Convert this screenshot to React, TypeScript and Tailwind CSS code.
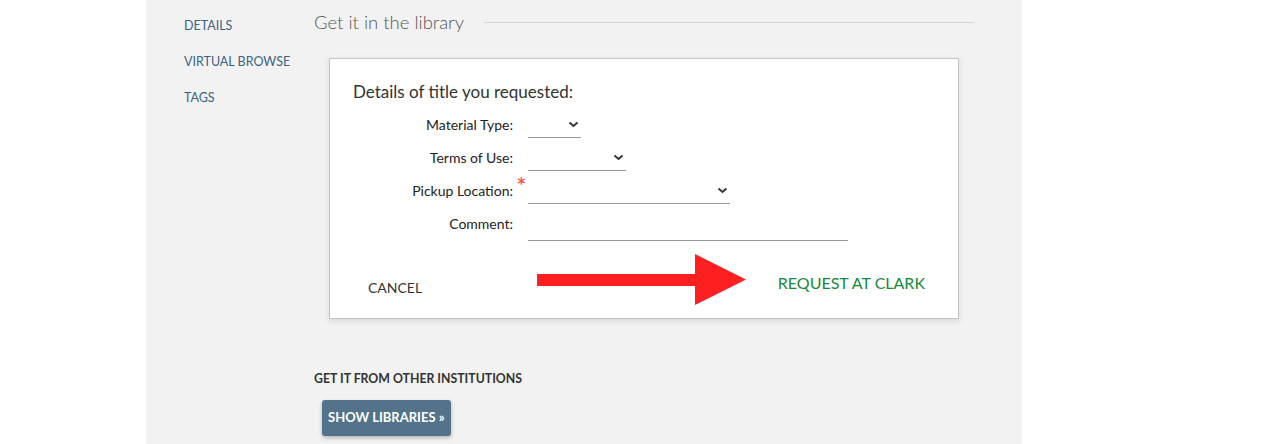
const font = { fontFamily: '"Source Sans Pro", Lato, "Noto Sans", sans-serif' };

const sideLinks = ["DETAILS", "VIRTUAL BROWSE", "TAGS"];

function Chevron() {
  return (
    <svg className="w-[11px] h-[7px]" viewBox="0 0 11 7">
      <path d="M1.5,1.5 L5.5,5 L9.5,1.5" stroke="#333" strokeWidth="2" fill="none" />
    </svg>
  );
}

function SelectField({ width }: { width: string }) {
  return (
    <div className={`h-[27px] border-b border-[#999] flex items-center justify-end pr-[2px] ${width}`}>
      <Chevron />
    </div>
  );
}

function Row({ label, required, children }: { label: string; required?: boolean; children: React.ReactNode }) {
  return (
    <div className="flex items-center h-[33px]">
      <div className="w-[160px] text-right text-[14px] text-[#222] relative">
        {label}
        {required && (
          <span className="absolute -right-[13px] -top-[4px] text-[#f0594a] text-[22px] leading-[20px] font-bold">*</span>
        )}
      </div>
      <div className="ml-[15px]">{children}</div>
    </div>
  );
}

export default function App() {
  return (
    <div className="flex w-[1266px] h-[444px] bg-white overflow-hidden" style={font}>
      <div className="w-[146px]" />
      <div className="w-[876px] bg-[#f2f2f2] flex pt-[9px]">
        {/* sidebar */}
        <div className="w-[168px] pl-[38px] pt-[8px] flex flex-col gap-[18px]">
          {sideLinks.map((l) => (
            <div key={l} className="text-[12.5px] leading-[18px] text-[#3d6283]">
              {l}
            </div>
          ))}
        </div>

        {/* main */}
        <div className="w-[660px]">
          <div className="flex items-center gap-5">
            <h2 className="text-[18.5px] leading-[26px] font-light text-[#555] whitespace-nowrap">
              Get it in the library
            </h2>
            <div className="flex-1 h-px bg-[#d4d4d4]" />
          </div>

          <div className="ml-[15px] mt-[23px] w-[630px] h-[261px] bg-white border border-[#c4c4c4] shadow-[0_2px_6px_rgba(0,0,0,0.12)]">
            <div className="pl-[23px] pt-[21px] text-[17px] leading-[24px] text-[#333]">
              Details of title you requested:
            </div>
            <div className="mt-[4px] pl-[23px]">
              <Row label="Material Type:">
                <SelectField width="w-[53px]" />
              </Row>
              <Row label="Terms of Use:">
                <SelectField width="w-[98px]" />
              </Row>
              <Row label="Pickup Location:" required>
                <SelectField width="w-[202px]" />
              </Row>
              <div className="flex items-start h-[34px]">
                <div className="w-[160px] text-right text-[14px] leading-[33px] text-[#222]">Comment:</div>
                <div className="ml-[15px] w-[320px] h-[34px] border-b border-[#999]" />
              </div>
            </div>

            <div className="flex items-start mt-[13px]">
              <div className="w-[207px] pl-[38px] mt-[24px] text-[14px] leading-[20px] text-[#333]">CANCEL</div>
              <svg className="w-[210px] h-[51px]" viewBox="0 0 210 51">
                <rect x="0" y="20" width="160" height="12" fill="#fe2020" />
                <polygon points="158,0 209,25.5 158,51" fill="#fe2020" />
              </svg>
              <div className="ml-auto mr-[33px] mt-[18px] text-[16px] leading-[22px] text-[#148a3a]">
                REQUEST AT CLARK
              </div>
            </div>
          </div>

          <div className="mt-[52px] text-[12.3px] leading-[16px] font-bold text-[#333]">
            GET IT FROM OTHER INSTITUTIONS
          </div>
          <button className="ml-[8px] mt-[13px] h-[36px] px-[6px] rounded-[3px] bg-[#527389] text-white text-[13px] font-bold shadow-[0_2px_4px_rgba(0,0,0,0.25)]">
            SHOW LIBRARIES »
          </button>
        </div>
      </div>
      <div className="flex-1" />
    </div>
  );
}
